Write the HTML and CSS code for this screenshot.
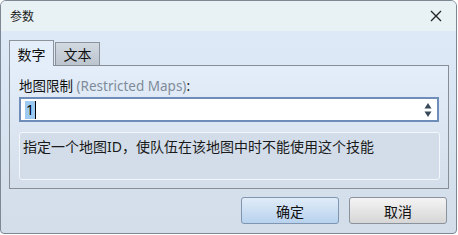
FILE: index.html
```html
<!DOCTYPE html>
<html lang="zh-CN">
<head>
    <meta charset="UTF-8">
    <title>参数</title>
    <link rel="stylesheet" href="styles.css">
</head>
<body>
    <div class="window">
        <div class="titlebar">
            <span class="title">参数</span>
            <span class="close">
                <svg width="12" height="12" viewBox="0 0 12 12"><path d="M1 1 L11 11 M11 1 L1 11" stroke="#222" stroke-width="1.3" fill="none"/></svg>
            </span>
        </div>

        <div class="client">
            <div class="tabs">
                <div class="tab active">数字</div>
                <div class="tab">文本</div>
            </div>

            <div class="panel">
                <div class="label">地图限制 <span class="hint">(Restricted Maps)</span>:</div>
                <div class="spin">
                    <span class="value"><span class="sel">1</span><span class="caret"></span></span>
                    <span class="arrows">
                        <svg width="8" height="16" viewBox="0 0 8 16">
                            <path d="M4 1 L7.5 6.5 L0.5 6.5 Z" fill="#3a4a5c"/>
                            <path d="M4 15 L7.5 9.5 L0.5 9.5 Z" fill="#3a4a5c"/>
                        </svg>
                    </span>
                </div>
                <div class="desc">指定一个地图ID，使队伍在该地图中时不能使用这个技能</div>
            </div>

            <div class="buttons">
                <button class="btn primary">确定</button>
                <button class="btn">取消</button>
            </div>
        </div>
    </div>
</body>
</html>
```

FILE: styles.css
```css
* {
    margin: 0;
    padding: 0;
    box-sizing: border-box;
    font-family: 'Noto Sans', 'Noto Sans CJK SC', sans-serif;
}

body {
    width: 458px;
    height: 235px;
    background: #ffffff;
    overflow: hidden;
}

.window {
    width: 457px;
    height: 234px;
    border: 1px solid #7d8894;
    border-radius: 6px 6px 4px 4px;
    background: linear-gradient(#e0ebfa, #d2dde9);
    display: flex;
    flex-direction: column;
    overflow: hidden;
}

.titlebar {
    height: 30px;
    background: #e8f2f5;
    display: flex;
    align-items: center;
    justify-content: space-between;
    padding: 0 14px 0 9px;
    font-size: 12px;
    color: #1a1a1a;
}

.close {
    display: flex;
    align-items: center;
}

.client {
    flex: 1;
    padding: 9px 8px 0 8px;
}

.tabs {
    display: flex;
    align-items: flex-end;
    height: 25px;
    position: relative;
    z-index: 1;
}

.tab {
    width: 45px;
    height: 23px;
    border: 1px solid #8d939b;
    border-bottom: none;
    background: linear-gradient(#d2d9e1, #bcc4ce);
    font-size: 14px;
    display: flex;
    align-items: center;
    justify-content: center;
    color: #111;
    margin-left: 1px;
}

.tab.active {
    height: 26px;
    margin-left: 0;
    margin-bottom: -1px;
    background: #e3eefa;
}

.panel {
    width: 440px;
    height: 124px;
    border: 1px solid #898d95;
    background: linear-gradient(#e3eefa, #d3deea);
    padding: 11px 9px 0 9px;
}

.label {
    font-size: 13.5px;
    color: #111;
    line-height: 18px;
    height: 20px;
}

.hint {
    color: #7f8b99;
}

.spin {
    width: 420px;
    height: 25px;
    border: 2px solid #6e8db8;
    background: #ffffff;
    display: flex;
    align-items: center;
    justify-content: space-between;
    padding: 0 5px 0 4px;
}

.value {
    display: flex;
    align-items: center;
    font-size: 14px;
}

.sel {
    background: #9ccaf0;
    padding: 0 1px;
    line-height: 18px;
}

.caret {
    width: 1px;
    height: 18px;
    background: #000;
}

.arrows {
    display: flex;
}

.desc {
    margin-top: 10px;
    width: 421px;
    height: 48px;
    border: 1px solid #f3f7fb;
    border-radius: 3px;
    background: #d2dde9;
    font-size: 14px;
    color: #1a1a1a;
    padding: 4px 3px;
    line-height: 20px;
}

.buttons {
    display: flex;
    justify-content: flex-end;
    gap: 10px;
    padding: 8px 1px 0 0;
}

.btn {
    width: 98px;
    height: 27px;
    border: 1px solid #8a929c;
    border-radius: 3px;
    background: linear-gradient(#f4f4f4, #d6d6d6);
    font-size: 14px;
    color: #111;
}

.btn.primary {
    border-color: #7f95b0;
    background: linear-gradient(#e0ecf8, #b8d2ee);
}
```
